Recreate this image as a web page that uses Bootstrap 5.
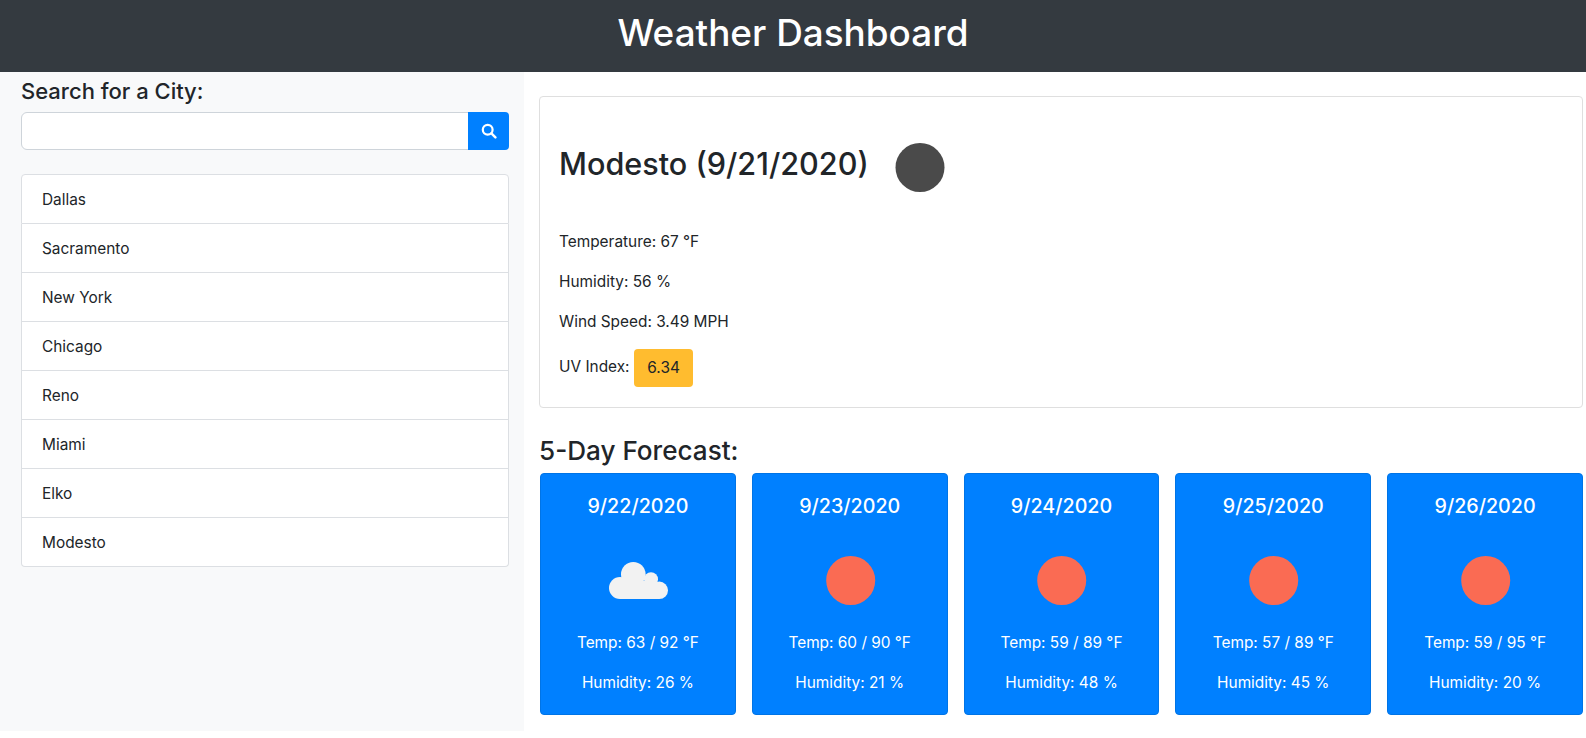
<!DOCTYPE html>
<html lang="en">
<head>
<meta charset="utf-8">
<title>Weather Dashboard</title>
<link href="https://cdn.jsdelivr.net/npm/bootstrap@5.3.0/dist/css/bootstrap.min.css" rel="stylesheet">
<style>
body{font-family:"Inter","Liberation Sans",sans-serif;color:#212529;font-size:15.4px;line-height:24px;}
h1,h2,h3,h4,h5{font-weight:500;line-height:1.2;}
.top-bar{background:#343a40;height:72px;color:#fff;}
.top-bar h1{font-size:36.9px;line-height:65px;margin:0;}
.page-row{align-items:flex-start;}
.side-col{width:524px;min-height:659px;flex:none;background:#f8f9fa;padding:5px 15px 0 21px;}
.side-col h4{font-size:22px;margin-bottom:6px;line-height:29px;}
.search-input{height:38px;border-color:#ced4da;}
.search-btn{width:41px;background:#0080ff;border:0;border-radius:0 4px 4px 0;padding:0;display:flex;align-items:center;justify-content:center;}
.city-list{margin-top:24px;border-radius:4px;}
.city-list .list-group-item{padding:13px 20px 11px;color:#212529;border-color:#dcdfe3;font-size:15.4px;line-height:24px;}
.main-col{flex:1;min-width:0;padding:24px 3px 0 15px;}
.today-card{border:1px solid #dfdfdf;border-radius:4px;padding:20px 20px 20px 19px;background:#fff;}
.today-card h2{font-size:30.6px;margin-bottom:12px;height:100px;}
.today-card h2 span{padding-bottom:6px;}
.today-card p{margin-bottom:15px;padding-top:1px;}
.today-card p.uv-line{margin-bottom:0;padding-top:0;}
.wx-icon{width:100px;height:100px;display:block;flex:none;}
.uv-chip{display:inline-block;background:#ffbc2f;border-radius:4px;padding:7px 13.5px;height:38px;line-height:24px;vertical-align:middle;color:#212529;}
.fc-title{font-size:26.1px;margin:28px 0 7px;line-height:30px;}
.fc-grid{display:flex;gap:16px;margin-left:1px;}
.fc-card{flex:1 1 0;min-width:0;background:#0080ff;border:1px solid #0074e6;border-radius:4px;padding:20px 20px 19px;color:#fff;text-align:center;}
.fc-card h5{font-size:19.7px;line-height:24px;margin-bottom:13px;}
.fc-card .wx-icon{margin:0 auto;}
.fc-card p{margin-bottom:16px;}
.fc-card p:last-child{margin-bottom:0;}
</style>
</head>
<body>
<header class="top-bar text-center"><h1>Weather Dashboard</h1></header>
<div class="d-flex page-row">
  <aside class="side-col">
    <h4>Search for a City:</h4>
    <div class="input-group">
      <input type="text" class="form-control search-input" aria-label="City">
      <button class="btn search-btn" type="button" aria-label="Search">
        <svg width="16" height="16" viewBox="0 0 16 16" fill="none" stroke="#fff"><circle cx="6.7" cy="6.7" r="4.9" stroke-width="2.2"/><path d="M10.4 10.4 14.4 14.4" stroke-width="2.4" stroke-linecap="round"/></svg>
      </button>
    </div>
    <ul class="list-group city-list">
      <li class="list-group-item">Dallas</li>
      <li class="list-group-item">Sacramento</li>
      <li class="list-group-item">New York</li>
      <li class="list-group-item">Chicago</li>
      <li class="list-group-item">Reno</li>
      <li class="list-group-item">Miami</li>
      <li class="list-group-item">Elko</li>
      <li class="list-group-item">Modesto</li>
    </ul>
  </aside>
  <main class="main-col">
    <section class="today-card">
      <h2 class="d-flex align-items-center">
        <span>Modesto (9/21/2020)</span>
        <svg class="wx-icon" viewBox="0 0 100 100"><circle cx="51" cy="50.500" r="24.500" fill="#4a4a4a"/></svg>
      </h2>
      <p>Temperature: 67 °F</p>
      <p>Humidity: 56 %</p>
      <p>Wind Speed: 3.49 MPH</p>
      <p class="uv-line">UV Index: <span class="uv-chip">6.34</span></p>
    </section>
    <h3 class="fc-title">5-Day Forecast:</h3>
    <div class="fc-grid">
      <div class="fc-card"><h5>9/22/2020</h5>
        <svg class="wx-icon" viewBox="0 0 100 100" fill="#f2f2f2"><circle cx="32" cy="57" r="11"/><circle cx="45.300" cy="43.300" r="12.300"/><circle cx="63" cy="48.300" r="7"/><circle cx="71.300" cy="59.300" r="8.700"/><rect x="32" y="50" width="37" height="18"/><rect x="32" y="60" width="39.300" height="8"/></svg>
        <p>Temp: 63 / 92 °F</p><p>Humidity: 26 %</p></div>
      <div class="fc-card"><h5>9/23/2020</h5>
        <svg class="wx-icon" viewBox="0 0 100 100"><circle cx="50.700" cy="49.500" r="24.500" fill="#fa6b53"/></svg>
        <p>Temp: 60 / 90 °F</p><p>Humidity: 21 %</p></div>
      <div class="fc-card"><h5>9/24/2020</h5>
        <svg class="wx-icon" viewBox="0 0 100 100"><circle cx="50.700" cy="49.500" r="24.500" fill="#fa6b53"/></svg>
        <p>Temp: 59 / 89 °F</p><p>Humidity: 48 %</p></div>
      <div class="fc-card"><h5>9/25/2020</h5>
        <svg class="wx-icon" viewBox="0 0 100 100"><circle cx="50.700" cy="49.500" r="24.500" fill="#fa6b53"/></svg>
        <p>Temp: 57 / 89 °F</p><p>Humidity: 45 %</p></div>
      <div class="fc-card"><h5>9/26/2020</h5>
        <svg class="wx-icon" viewBox="0 0 100 100"><circle cx="50.700" cy="49.500" r="24.500" fill="#fa6b53"/></svg>
        <p>Temp: 59 / 95 °F</p><p>Humidity: 20 %</p></div>
    </div>
  </main>
</div>
</body>
</html>
